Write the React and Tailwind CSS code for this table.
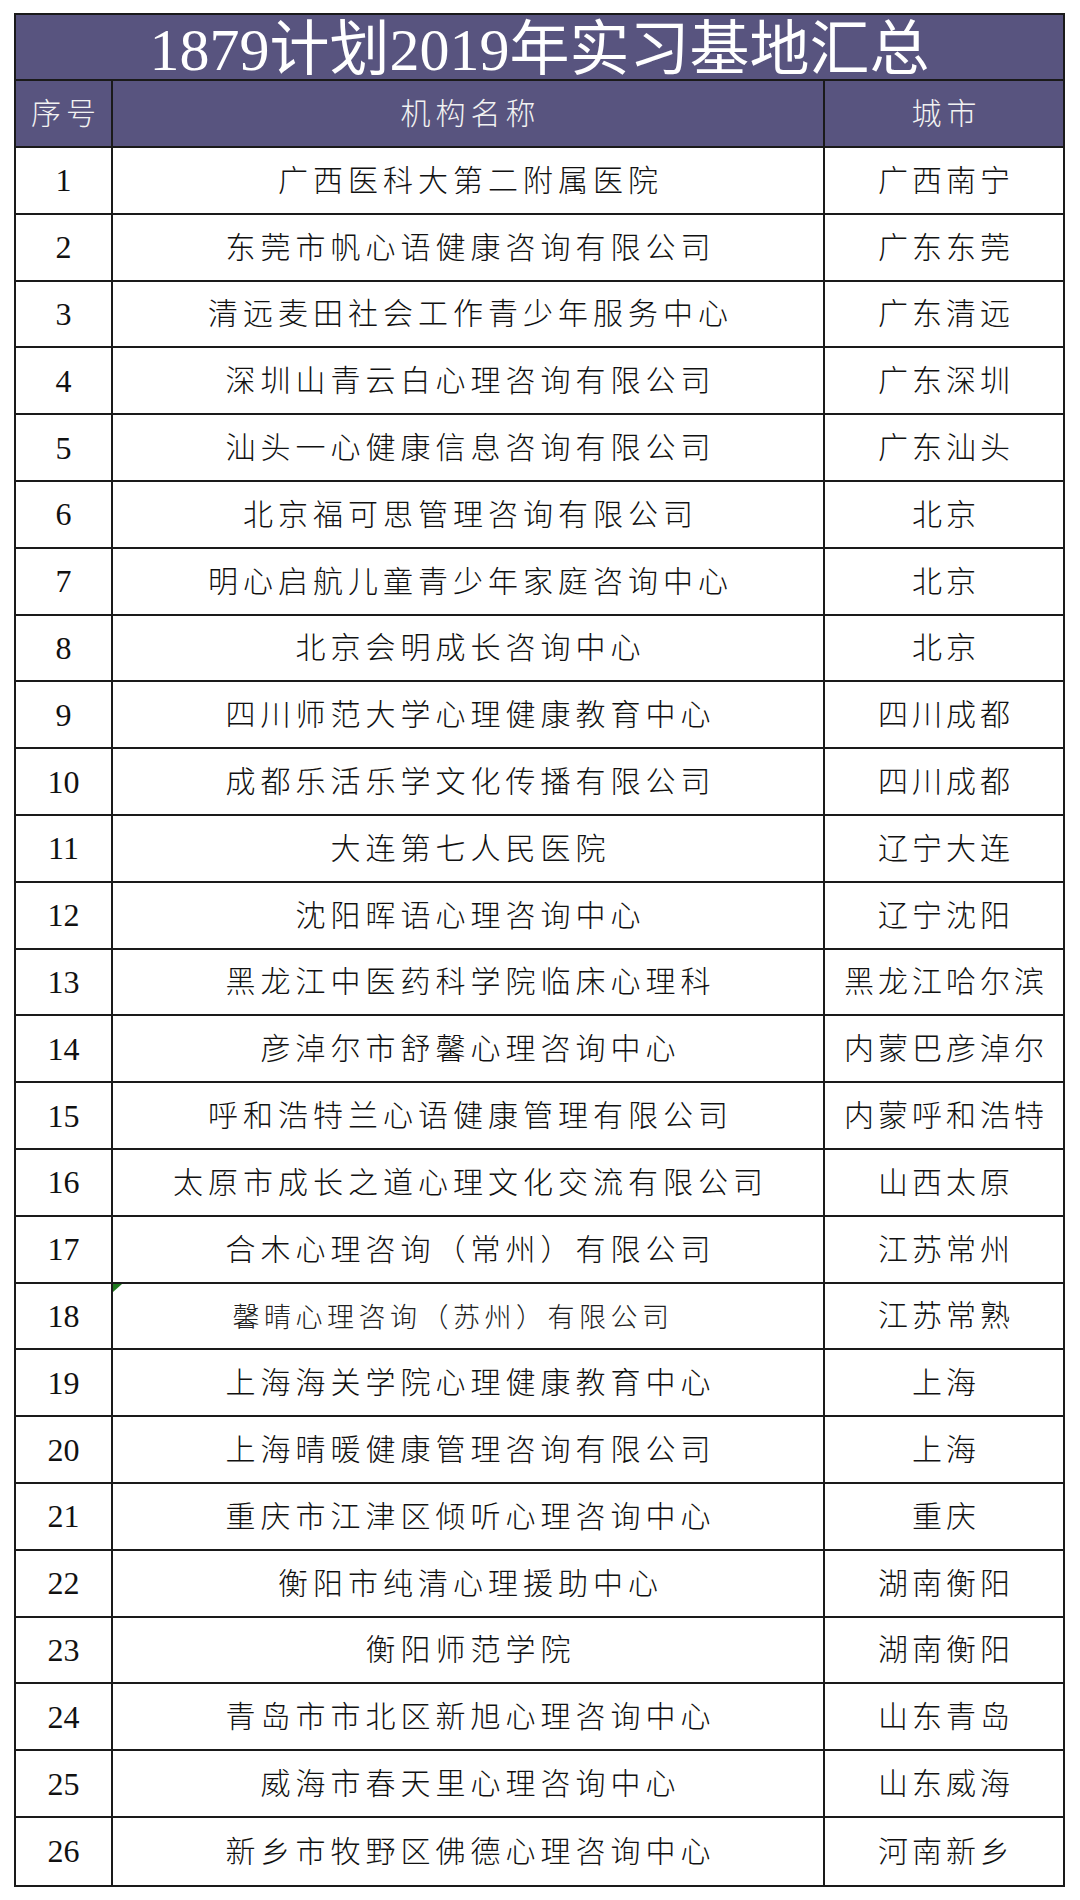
import React from "react";

const rows = [
  ["1", "广西医科大第二附属医院", "广西南宁"],
  ["2", "东莞市帆心语健康咨询有限公司", "广东东莞"],
  ["3", "清远麦田社会工作青少年服务中心", "广东清远"],
  ["4", "深圳山青云白心理咨询有限公司", "广东深圳"],
  ["5", "汕头一心健康信息咨询有限公司", "广东汕头"],
  ["6", "北京福可思管理咨询有限公司", "北京"],
  ["7", "明心启航儿童青少年家庭咨询中心", "北京"],
  ["8", "北京会明成长咨询中心", "北京"],
  ["9", "四川师范大学心理健康教育中心", "四川成都"],
  ["10", "成都乐活乐学文化传播有限公司", "四川成都"],
  ["11", "大连第七人民医院", "辽宁大连"],
  ["12", "沈阳晖语心理咨询中心", "辽宁沈阳"],
  ["13", "黑龙江中医药科学院临床心理科", "黑龙江哈尔滨"],
  ["14", "彦淖尔市舒馨心理咨询中心", "内蒙巴彦淖尔"],
  ["15", "呼和浩特兰心语健康管理有限公司", "内蒙呼和浩特"],
  ["16", "太原市成长之道心理文化交流有限公司", "山西太原"],
  ["17", "合木心理咨询（常州）有限公司", "江苏常州"],
  ["18", "馨晴心理咨询（苏州）有限公司", "江苏常熟"],
  ["19", "上海海关学院心理健康教育中心", "上海"],
  ["20", "上海晴暖健康管理咨询有限公司", "上海"],
  ["21", "重庆市江津区倾听心理咨询中心", "重庆"],
  ["22", "衡阳市纯清心理援助中心", "湖南衡阳"],
  ["23", "衡阳师范学院", "湖南衡阳"],
  ["24", "青岛市市北区新旭心理咨询中心", "山东青岛"],
  ["25", "威海市春天里心理咨询中心", "山东威海"],
  ["26", "新乡市牧野区佛德心理咨询中心", "河南新乡"],
];

const serif = "font-['Liberation_Serif','Noto_Sans_CJK_SC',serif]";

export default function App() {
  return (
    <div className="w-[1080px] h-[1900px] bg-white pt-[13px] pl-[14px]">
      <div className={`w-[1051px] border-2 border-[#1a1a1a] ${serif}`}>
        <div className="h-[66px] border-b-2 border-[#1a1a1a] bg-[#58547f] flex items-center justify-center">
          <span className="text-[60px] leading-none text-white font-normal mt-[6px]">
            1879计划2019年实习基地汇总
          </span>
        </div>
        <div className="h-[67px] border-b-2 border-[#1a1a1a] bg-[#58547f] grid grid-cols-[95px_712px_240px] text-[30px] text-[#f2f2f2] font-light tracking-[5px]">
          <div className="flex items-center justify-center pl-[5px]">序号</div>
          <div className="flex items-center justify-center pl-[5px] border-l-2 border-[#1a1a1a]">机构名称</div>
          <div className="flex items-center justify-center pl-[5px] border-l-2 border-[#1a1a1a]">城市</div>
        </div>
        {rows.map((r, i) => (
          <div
            key={r[0]}
            className={`h-[66.8px] grid grid-cols-[95px_712px_240px] text-[#111] ${
              i < rows.length - 1 ? "border-b-2 border-[#1a1a1a]" : ""
            }`}
          >
            <div className="flex items-center justify-center text-[32px]">{r[0]}</div>
            <div className="relative flex items-center justify-center border-l-2 border-[#1a1a1a]">
              {r[0] === "18" ? (
                <>
                  <span className="absolute left-0 top-0 w-0 h-0 border-t-[8px] border-t-[#1f7a1f] border-r-[9px] border-r-transparent" />
                  <span className="text-[27px] font-['Noto_Sans_CJK_SC',sans-serif] font-light tracking-[4.5px] mr-[30px] text-[#222]">
                    {r[1]}
                  </span>
                </>
              ) : (
                <span className="text-[30px] font-light tracking-[5px] pl-[5px]">{r[1]}</span>
              )}
            </div>
            <div className="flex items-center justify-center border-l-2 border-[#1a1a1a] whitespace-nowrap">
              <span className="text-[30px] font-light tracking-[4px] pl-[4px]">{r[2]}</span>
            </div>
          </div>
        ))}
      </div>
    </div>
  );
}
